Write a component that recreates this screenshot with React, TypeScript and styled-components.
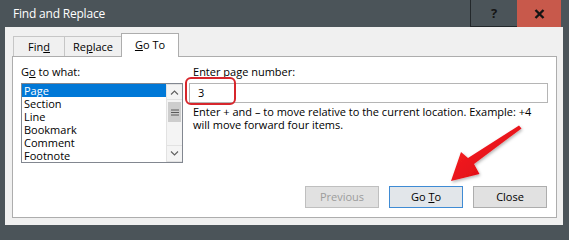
import React from 'react';
import styled, { createGlobalStyle } from 'styled-components';

const frameColor = '#4b5459';

const GlobalStyle = createGlobalStyle`
  html, body {
    margin: 0;
    padding: 0;
    background: ${frameColor};
  }

  body {
    font-family: 'Open Sans', 'Noto Sans', sans-serif;
    font-size: 11px;
    color: #000;
  }
`;

const StyledWindow = styled.div`
  background: ${frameColor};
  display: flex;
  flex-direction: column;
  height: 232px;
  overflow: hidden;
  position: relative;
  width: 569px;
`;

const StyledTitleBar = styled.div`
  display: flex;
  flex-shrink: 0;
  height: 27px;
  padding: 0 8px 0 0;
`;

const StyledTitle = styled.div`
  align-items: center;
  color: #fff;
  display: flex;
  flex: 1;
  font-size: 12px;
  letter-spacing: -0.2px;
  padding: 0 0 1px 13px;
`;

const StyledCaptionButton = styled.div<{ $close?: boolean }>`
  align-items: center;
  background: ${({ $close }) => ($close ? '#c8594b' : frameColor)};
  border-bottom: ${({ $close }) => ($close ? 'none' : '1px solid #23282b')};
  border-left: ${({ $close }) => ($close ? 'none' : '1px solid #23282b')};
  box-sizing: border-box;
  color: #151515;
  display: flex;
  font-size: 13px;
  font-weight: 700;
  height: 27px;
  justify-content: center;
  width: ${({ $close }) => ($close ? 44 : 47)}px;
`;

const StyledClient = styled.div`
  background: #f0f0f0;
  display: flex;
  flex: 1;
  flex-direction: column;
  margin: 0 6px 7px 5px;
  padding: 6px 6px 7px 7px;
`;

const StyledTabRow = styled.div`
  align-items: flex-end;
  display: flex;
  flex-shrink: 0;
  height: 23px;
  padding: 0 0 0 1px;
  position: relative;
  z-index: 1;
`;

const StyledTab = styled.div<{ $active?: boolean; $width: number }>`
  align-items: center;
  background: ${({ $active }) => ($active ? '#fff' : '#f0f0f0')};
  border: 1px solid ${({ $active }) => ($active ? '#adadad' : '#c6c6c6')};
  border-bottom: none;
  box-sizing: border-box;
  display: flex;
  height: ${({ $active }) => ($active ? 24 : 20)}px;
  justify-content: center;
  margin: 0 0 ${({ $active }) => ($active ? -1 : 0)}px -1px;
  padding: ${({ $active }) => ($active ? '0 0 3px' : '0 0 1px')};
  width: ${({ $width }) => $width}px;

  &:first-child {
    margin-left: 0;
  }
`;

const StyledPanel = styled.div`
  background: #fff;
  border: 1px solid #adadad;
  display: flex;
  flex: 1;
  flex-direction: column;
  padding: 7px 8px 9px 8px;
`;

const StyledTopRow = styled.div`
  display: flex;
  gap: 6px;
`;

const StyledListColumn = styled.div`
  display: flex;
  flex-direction: column;
  width: 162px;
`;

const StyledPageColumn = styled.div`
  display: flex;
  flex: 1;
  flex-direction: column;
`;

const StyledLabel = styled.div<{ $indent?: number }>`
  line-height: 15px;
  padding: 0 0 0 ${({ $indent }) => $indent || 0}px;
  white-space: nowrap;
`;

const StyledListBox = styled.div`
  border: 1px solid #828790;
  box-sizing: border-box;
  display: flex;
  height: 80px;
  margin: 4px 0 0;
`;

const StyledItems = styled.div`
  display: flex;
  flex-direction: column;
  width: 144px;
`;

const StyledItem = styled.div<{ $selected?: boolean }>`
  background: ${({ $selected }) => ($selected ? '#0078d7' : 'transparent')};
  color: ${({ $selected }) => ($selected ? '#fff' : '#000')};
  height: 13px;
  line-height: 13px;
  padding: 0 0 0 2px;
`;

const StyledScrollBar = styled.div`
  background: #f4f4f4;
  border-left: 1px solid #e2e2e2;
  box-sizing: border-box;
  display: flex;
  flex-direction: column;
  width: 16px;
`;

const StyledScrollArrow = styled.div<{ $height: number }>`
  align-items: center;
  border-bottom: 1px solid #e2e2e2;
  border-top: 1px solid #e2e2e2;
  box-sizing: border-box;
  display: flex;
  height: ${({ $height }) => $height}px;
  justify-content: center;

  & svg {
    height: 7px;
    width: 9px;
  }
`;

const StyledThumb = styled.div`
  align-items: center;
  background: #cdcdcd;
  display: flex;
  height: 20px;
  justify-content: center;
  margin: 2px 1px 0;
`;

const StyledTrack = styled.div`
  flex: 1;
`;

const StyledInputWrap = styled.div`
  margin: 4px 0 0;
  position: relative;
`;

const StyledInput = styled.div`
  background: #fff;
  border: 1px solid #b5b5b5;
  box-sizing: border-box;
  height: 20px;
  line-height: 18px;
  padding: 0 0 0 8px;
`;

const StyledHighlight = styled.div`
  border: 2px solid #d7262c;
  border-radius: 6px;
  box-sizing: border-box;
  height: 28px;
  left: -4px;
  position: absolute;
  top: -6px;
  width: 51px;
`;

const StyledHelp = styled.div`
  line-height: 13px;
  margin: 2px 0 0;
  padding: 0 0 0 4px;
  white-space: nowrap;
`;

const StyledButtonRow = styled.div`
  display: flex;
  gap: 10px;
  justify-content: flex-end;
  margin: auto 1px 0 0;
`;

const StyledButton = styled.div<{ $default?: boolean; $disabled?: boolean }>`
  align-items: center;
  background: ${({ $default }) => ($default ? '#e2e6ea' : '#e1e1e1')};
  border: 1px solid ${({ $default, $disabled }) => ($default ? '#3f8bd4' : $disabled ? '#bfbfbf' : '#adadad')};
  box-sizing: border-box;
  color: ${({ $disabled }) => ($disabled ? '#9c9c9c' : '#000')};
  display: flex;
  height: 22px;
  justify-content: center;
  padding: 0 0 1px;
  width: 74px;
`;

const StyledArrow = styled.svg`
  height: 232px;
  left: 0;
  pointer-events: none;
  position: absolute;
  top: 0;
  width: 569px;
`;

const items = ['Page', 'Section', 'Line', 'Bookmark', 'Comment', 'Footnote'];

const Chevron = ({ up }: { up?: boolean }) => (
  <svg viewBox="0 0 9 7">
    <path d={up ? 'M1 5.5 L4.5 2 L8 5.5' : 'M1 1.5 L4.5 5 L8 1.5'} fill="none" stroke="#606060" strokeWidth="1.1" />
  </svg>
);

export default function App() {
  return (
    <StyledWindow>
      <GlobalStyle />
      <StyledTitleBar>
        <StyledTitle>Find and Replace</StyledTitle>
        <StyledCaptionButton>?</StyledCaptionButton>
        <StyledCaptionButton $close>
          <svg width="11" height="10" viewBox="0 0 11 10">
            <path d="M1.5 1 L9.5 9 M9.5 1 L1.5 9" stroke="#151515" strokeWidth="2.4" />
          </svg>
        </StyledCaptionButton>
      </StyledTitleBar>

      <StyledClient>
        <StyledTabRow>
          <StyledTab $width={52}>
            <span>
              Fin<u>d</u>
            </span>
          </StyledTab>
          <StyledTab $width={58}>
            <span>
              Re<u>p</u>lace
            </span>
          </StyledTab>
          <StyledTab $active $width={58}>
            <span>
              <u>G</u>o To
            </span>
          </StyledTab>
        </StyledTabRow>

        <StyledPanel>
          <StyledTopRow>
            <StyledListColumn>
              <StyledLabel>
                G<u>o</u> to what:
              </StyledLabel>
              <StyledListBox>
                <StyledItems>
                  {items.map((item, i) => (
                    <StyledItem key={item} $selected={i === 0}>
                      {item}
                    </StyledItem>
                  ))}
                </StyledItems>
                <StyledScrollBar>
                  <StyledScrollArrow $height={16}>
                    <Chevron up />
                  </StyledScrollArrow>
                  <StyledThumb>
                    <svg width="8" height="7" viewBox="0 0 8 7">
                      <path d="M0 1 H8 M0 3.5 H8 M0 6 H8" stroke="#5a5a5a" strokeWidth="1" />
                    </svg>
                  </StyledThumb>
                  <StyledTrack />
                  <StyledScrollArrow $height={17}>
                    <Chevron />
                  </StyledScrollArrow>
                </StyledScrollBar>
              </StyledListBox>
            </StyledListColumn>

            <StyledPageColumn>
              <StyledLabel $indent={4}>
                <u>E</u>nter page number:
              </StyledLabel>
              <StyledInputWrap>
                <StyledInput>3</StyledInput>
                <StyledHighlight />
              </StyledInputWrap>
              <StyledHelp>
                Enter + and – to move relative to the current location. Example: +4
                <br />
                will move forward four items.
              </StyledHelp>
            </StyledPageColumn>
          </StyledTopRow>

          <StyledButtonRow>
            <StyledButton $disabled>Previous</StyledButton>
            <StyledButton $default>
              <span>
                Go <u>T</u>o
              </span>
            </StyledButton>
            <StyledButton>Close</StyledButton>
          </StyledButtonRow>
        </StyledPanel>
      </StyledClient>

      <StyledArrow viewBox="0 0 569 232">
        <defs>
          <linearGradient id="arrowFill" x1="0" y1="0" x2="1" y2="1">
            <stop offset="0" stopColor="#ff2a2a" />
            <stop offset="1" stopColor="#d4000c" />
          </linearGradient>
          <filter id="arrowShadow" x="-20%" y="-20%" width="140%" height="140%">
            <feDropShadow dx="1" dy="1.5" stdDeviation="1.5" floodColor="#000" floodOpacity="0.3" />
          </filter>
        </defs>
        <path
          d="M519 125.5 L521.5 128.5 L474 164 L479.5 174 L451 181 L461 152 L468 158 Z"
          fill="url(#arrowFill)"
          filter="url(#arrowShadow)"
        />
      </StyledArrow>
    </StyledWindow>
  );
}
